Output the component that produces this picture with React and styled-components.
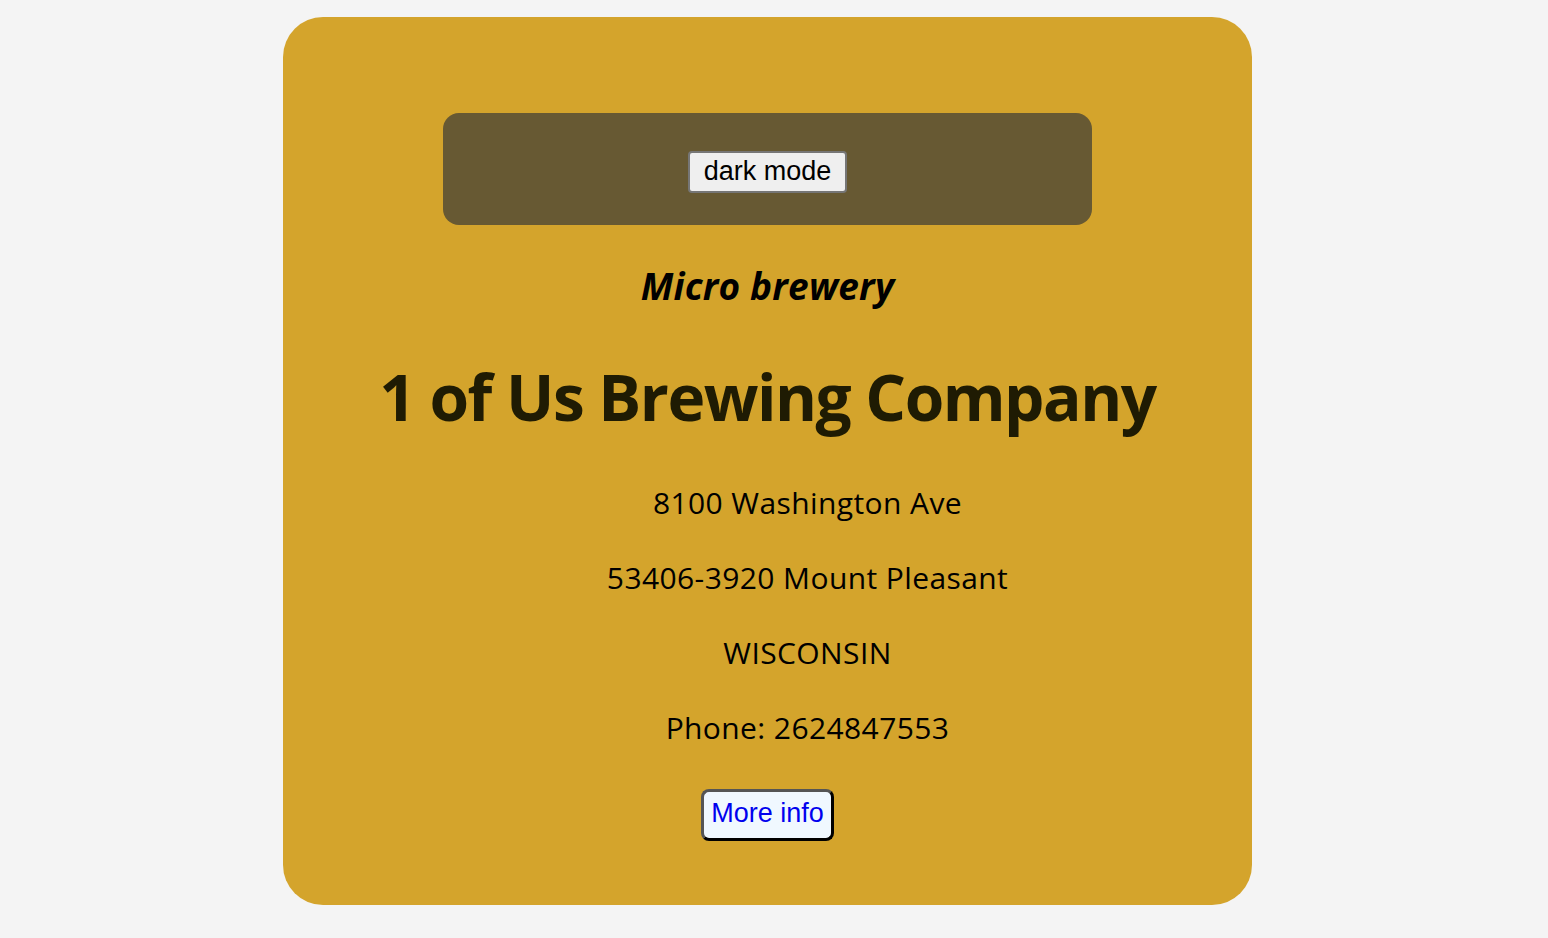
import React from "react";
import styled, { createGlobalStyle } from "styled-components";

const Global = createGlobalStyle`
  html, body { margin: 0; padding: 0; background: #f4f4f4; }
  body { font-family: "Open Sans", "Noto Sans", sans-serif; }
`;

const Page = styled.div`
  display: flex;
  justify-content: center;
  padding: 17px 13px 33px 0;
`;

const Card = styled.main`
  width: 969px;
  height: 888px;
  box-sizing: border-box;
  background: #d4a42c;
  border-radius: 40px;
  display: flex;
  flex-direction: column;
  align-items: center;
  padding-top: 96px;
`;

const Bar = styled.div`
  width: 649px;
  height: 112px;
  box-sizing: border-box;
  background: #675933;
  border-radius: 16px;
  display: flex;
  justify-content: center;
  padding-top: 38px;
`;

const ModeButton = styled.button`
  height: 42px;
  width: 159px;
  box-sizing: border-box;
  font-family: "Liberation Sans", Arial, sans-serif;
  font-size: 27px;
  line-height: 34px;
  color: #000;
  background: #efefef;
  border: 2px solid #767676;
  border-radius: 4px;
  padding: 0 0 2px;
`;

const Kind = styled.h3`
  margin: 39px 0 0;
  font-size: 37px;
  font-style: italic;
  font-weight: 700;
  color: #000;
  letter-spacing: 0.2px;
  line-height: 44px;
`;

const Title = styled.h1`
  margin: 49px 0 0;
  font-size: 64px;
  font-weight: 700;
  color: #1f1b03;
  line-height: 80px;
  letter-spacing: -1.5px;
`;

const Info = styled.ul`
  list-style: none;
  margin: 45px 0 0;
  padding: 0 0 0 80px;
  display: flex;
  flex-direction: column;
  align-items: center;
  gap: 34px;
`;

const Line = styled.li`
  font-size: 30px;
  line-height: 41px;
  color: #000;
  letter-spacing: 0.4px;
`;

const MoreButton = styled.button`
  margin-top: 41px;
  width: 133px;
  height: 52px;
  box-sizing: border-box;
  font-family: "Liberation Sans", Arial, sans-serif;
  font-size: 27px;
  color: #0000ee;
  background: #f0f8ff;
  border: 3px solid;
  border-color: #555 #000 #000 #555;
  border-radius: 8px;
  padding: 0 0 4px;
`;

export default function App() {
  return (
    <>
      <Global />
      <Page>
        <Card>
          <Bar>
            <ModeButton>dark mode</ModeButton>
          </Bar>
          <Kind>Micro brewery</Kind>
          <Title>1 of Us Brewing Company</Title>
          <Info>
            <Line>8100 Washington Ave</Line>
            <Line>53406-3920 Mount Pleasant</Line>
            <Line>WISCONSIN</Line>
            <Line>Phone: 2624847553</Line>
          </Info>
          <MoreButton>More info</MoreButton>
        </Card>
      </Page>
    </>
  );
}
